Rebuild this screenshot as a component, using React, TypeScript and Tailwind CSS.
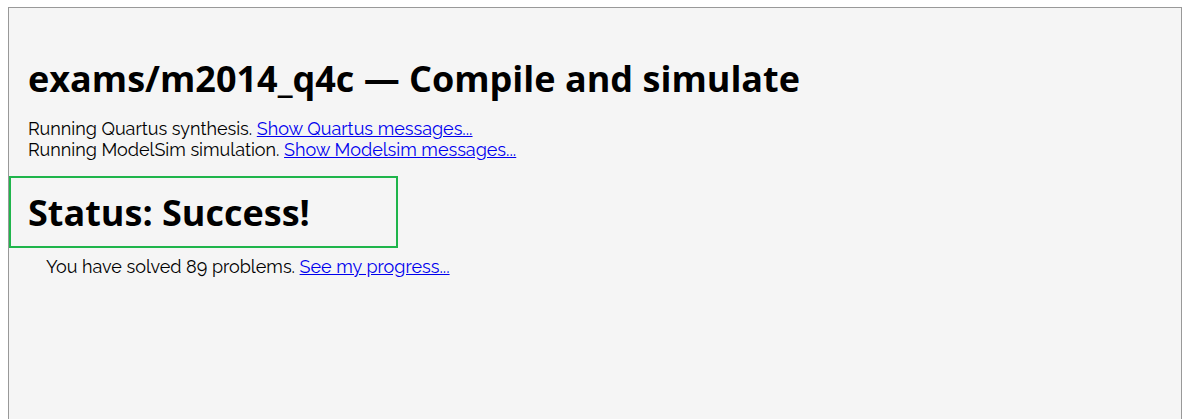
export default function App() {
  const body = { fontFamily: 'Raleway, Lato, "Liberation Sans", sans-serif' };
  return (
    <div className="min-h-screen bg-white pl-2 pr-[5px] pt-[7px]">
      <div className="min-h-[420px] border border-[#999999] bg-[#f5f5f5] text-black" style={body}>
        <div className="px-[19px] pt-[47px]">
          <h1 className="text-[36px] font-bold leading-[48px] font-['Open_Sans',sans-serif]">
            exams/m2014_q4c — Compile and simulate
          </h1>
          <div className="mt-[15px] text-[18px] leading-[21px]">
            <div>
              Running Quartus synthesis.{' '}
              <a href="#" className="text-[#0000ee] underline">
                Show Quartus messages...
              </a>
            </div>
            <div>
              Running ModelSim simulation.{' '}
              <a href="#" className="text-[#0000ee] underline">
                Show Modelsim messages...
              </a>
            </div>
          </div>
        </div>
        <div className="mt-[16px] w-[389px] border-2 border-[#1fb54b] px-[17px] pt-[13px] pb-[11px]">
          <h2 className="text-[36px] font-bold leading-[44px] font-['Open_Sans',sans-serif]">
            Status: Success!
          </h2>
        </div>
        <div className="pl-[37px] pt-[8px] text-[18px] leading-[21px]">
          You have solved 89 problems.{' '}
          <a href="#" className="text-[#0000ee] underline">
            See my progress...
          </a>
        </div>
      </div>
    </div>
  );
}
